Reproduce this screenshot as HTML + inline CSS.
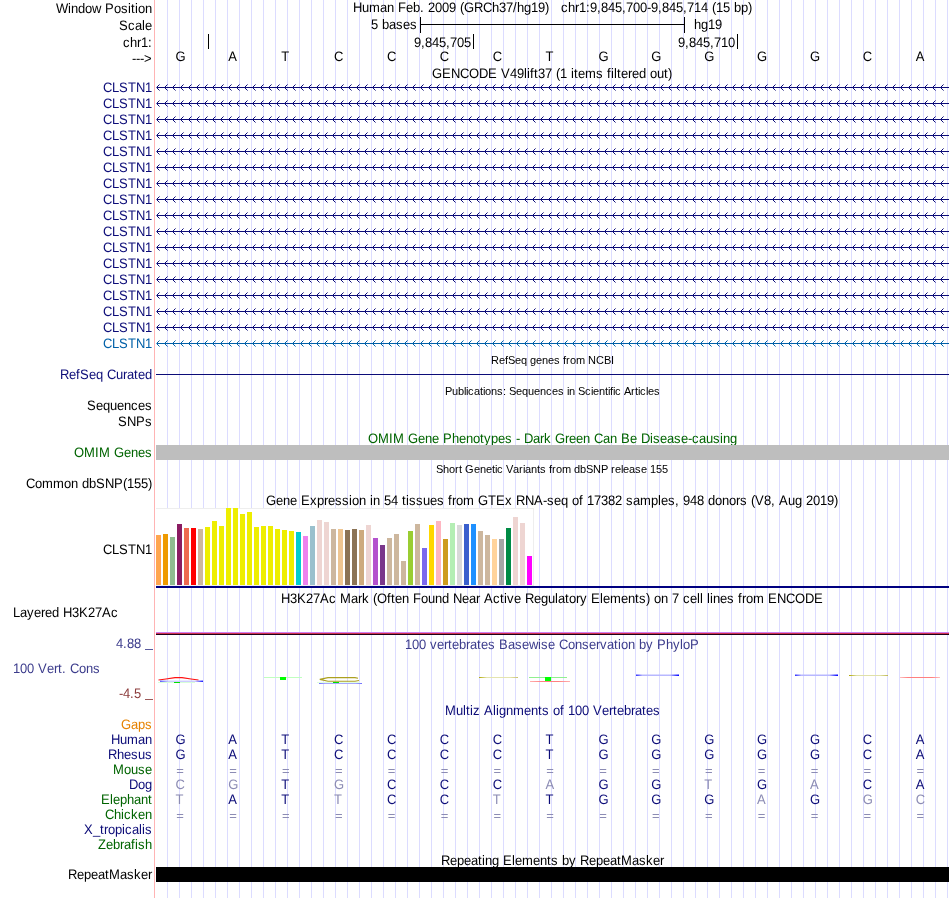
<!DOCTYPE html>
<html><head><meta charset="utf-8"><style>
html,body{margin:0;padding:0;background:#fff;width:950px;height:898px;overflow:hidden}
svg{display:block;will-change:transform;font-family:"Liberation Sans",sans-serif}
</style></head><body>
<svg width="950" height="898" viewBox="0 0 950 898">
<defs><pattern id="arN" x="157" y="84" width="8" height="16" patternUnits="userSpaceOnUse"><path d="M0,2h1v3h-1z M1,1h1v1h-1z M1,5h1v1h-1z" fill="#0c0c78"/><path d="M2,0h1v1h-1z M2,6h1v1h-1z" fill="#0c0c78" fill-opacity="0.55"/></pattern><pattern id="arT" x="157" y="84" width="8" height="16" patternUnits="userSpaceOnUse"><path d="M0,2h1v3h-1z M1,1h1v1h-1z M1,5h1v1h-1z" fill="#0060a8"/><path d="M2,0h1v1h-1z M2,6h1v1h-1z" fill="#0060a8" fill-opacity="0.55"/></pattern><linearGradient id="g1" x1="0" x2="1" y1="0" y2="0"><stop offset="0" stop-color="#4848ff"/><stop offset="0.2" stop-color="#c8c8ff"/><stop offset="0.82" stop-color="#c8c8ff"/><stop offset="1" stop-color="#0000ff"/></linearGradient><linearGradient id="g2" x1="0" x2="1" y1="0" y2="0"><stop offset="0" stop-color="#7070ff"/><stop offset="0.15" stop-color="#a8a8ff"/><stop offset="0.85" stop-color="#a8a8ff"/><stop offset="1" stop-color="#7070ff"/></linearGradient><linearGradient id="g3" x1="0" x2="1" y1="0" y2="0"><stop offset="0" stop-color="#b0a800"/><stop offset="0.2" stop-color="#e4e4b0"/><stop offset="0.8" stop-color="#e4e4b0"/><stop offset="1" stop-color="#c8c070"/></linearGradient><linearGradient id="g4" x1="0" x2="1" y1="0" y2="0"><stop offset="0" stop-color="#ffb0b0"/><stop offset="0.3" stop-color="#ff8080"/><stop offset="0.7" stop-color="#ff8080"/><stop offset="1" stop-color="#ffb0b0"/></linearGradient><linearGradient id="g5" x1="0" x2="1" y1="0" y2="0"><stop offset="0" stop-color="#3030ff"/><stop offset="0.15" stop-color="#b8b8ff"/><stop offset="0.8" stop-color="#b8b8ff"/><stop offset="1" stop-color="#0000ff"/></linearGradient><linearGradient id="g6" x1="0" x2="1" y1="0" y2="0"><stop offset="0" stop-color="#3030ff"/><stop offset="0.15" stop-color="#b8b8ff"/><stop offset="0.8" stop-color="#b8b8ff"/><stop offset="1" stop-color="#0000ff"/></linearGradient><linearGradient id="g7" x1="0" x2="1" y1="0" y2="0"><stop offset="0" stop-color="#b0a800"/><stop offset="0.2" stop-color="#e0e0a8"/><stop offset="0.8" stop-color="#e0e0a8"/><stop offset="1" stop-color="#c0b850"/></linearGradient><linearGradient id="g8" x1="0" x2="1" y1="0" y2="0"><stop offset="0" stop-color="#ffc0c0"/><stop offset="0.2" stop-color="#ff8080"/><stop offset="0.8" stop-color="#ff8080"/><stop offset="1" stop-color="#ffc0c0"/></linearGradient></defs>
<rect x="154" y="0" width="1" height="898" fill="#ffb4b4"/>
<rect x="167" y="0" width="1" height="898" fill="#dcdcff"/>
<rect x="179" y="0" width="1" height="898" fill="#dcdcff"/>
<rect x="191" y="0" width="1" height="898" fill="#dcdcff"/>
<rect x="203" y="0" width="1" height="898" fill="#dcdcff"/>
<rect x="215" y="0" width="1" height="898" fill="#dcdcff"/>
<rect x="227" y="0" width="1" height="898" fill="#dcdcff"/>
<rect x="239" y="0" width="1" height="898" fill="#dcdcff"/>
<rect x="251" y="0" width="1" height="898" fill="#dcdcff"/>
<rect x="263" y="0" width="1" height="898" fill="#dcdcff"/>
<rect x="275" y="0" width="1" height="898" fill="#dcdcff"/>
<rect x="287" y="0" width="1" height="898" fill="#dcdcff"/>
<rect x="299" y="0" width="1" height="898" fill="#dcdcff"/>
<rect x="311" y="0" width="1" height="898" fill="#dcdcff"/>
<rect x="323" y="0" width="1" height="898" fill="#dcdcff"/>
<rect x="335" y="0" width="1" height="898" fill="#dcdcff"/>
<rect x="347" y="0" width="1" height="898" fill="#dcdcff"/>
<rect x="359" y="0" width="1" height="898" fill="#dcdcff"/>
<rect x="371" y="0" width="1" height="898" fill="#dcdcff"/>
<rect x="383" y="0" width="1" height="898" fill="#dcdcff"/>
<rect x="395" y="0" width="1" height="898" fill="#dcdcff"/>
<rect x="407" y="0" width="1" height="898" fill="#dcdcff"/>
<rect x="419" y="0" width="1" height="898" fill="#dcdcff"/>
<rect x="431" y="0" width="1" height="898" fill="#dcdcff"/>
<rect x="443" y="0" width="1" height="898" fill="#dcdcff"/>
<rect x="455" y="0" width="1" height="898" fill="#dcdcff"/>
<rect x="467" y="0" width="1" height="898" fill="#dcdcff"/>
<rect x="479" y="0" width="1" height="898" fill="#dcdcff"/>
<rect x="491" y="0" width="1" height="898" fill="#dcdcff"/>
<rect x="503" y="0" width="1" height="898" fill="#dcdcff"/>
<rect x="515" y="0" width="1" height="898" fill="#dcdcff"/>
<rect x="527" y="0" width="1" height="898" fill="#dcdcff"/>
<rect x="539" y="0" width="1" height="898" fill="#dcdcff"/>
<rect x="551" y="0" width="1" height="898" fill="#dcdcff"/>
<rect x="563" y="0" width="1" height="898" fill="#dcdcff"/>
<rect x="575" y="0" width="1" height="898" fill="#dcdcff"/>
<rect x="587" y="0" width="1" height="898" fill="#dcdcff"/>
<rect x="599" y="0" width="1" height="898" fill="#dcdcff"/>
<rect x="611" y="0" width="1" height="898" fill="#dcdcff"/>
<rect x="623" y="0" width="1" height="898" fill="#dcdcff"/>
<rect x="635" y="0" width="1" height="898" fill="#dcdcff"/>
<rect x="647" y="0" width="1" height="898" fill="#dcdcff"/>
<rect x="659" y="0" width="1" height="898" fill="#dcdcff"/>
<rect x="671" y="0" width="1" height="898" fill="#dcdcff"/>
<rect x="683" y="0" width="1" height="898" fill="#dcdcff"/>
<rect x="695" y="0" width="1" height="898" fill="#dcdcff"/>
<rect x="707" y="0" width="1" height="898" fill="#dcdcff"/>
<rect x="719" y="0" width="1" height="898" fill="#dcdcff"/>
<rect x="731" y="0" width="1" height="898" fill="#dcdcff"/>
<rect x="743" y="0" width="1" height="898" fill="#dcdcff"/>
<rect x="755" y="0" width="1" height="898" fill="#dcdcff"/>
<rect x="767" y="0" width="1" height="898" fill="#dcdcff"/>
<rect x="779" y="0" width="1" height="898" fill="#dcdcff"/>
<rect x="791" y="0" width="1" height="898" fill="#dcdcff"/>
<rect x="803" y="0" width="1" height="898" fill="#dcdcff"/>
<rect x="815" y="0" width="1" height="898" fill="#dcdcff"/>
<rect x="827" y="0" width="1" height="898" fill="#dcdcff"/>
<rect x="839" y="0" width="1" height="898" fill="#dcdcff"/>
<rect x="851" y="0" width="1" height="898" fill="#dcdcff"/>
<rect x="863" y="0" width="1" height="898" fill="#dcdcff"/>
<rect x="875" y="0" width="1" height="898" fill="#dcdcff"/>
<rect x="887" y="0" width="1" height="898" fill="#dcdcff"/>
<rect x="899" y="0" width="1" height="898" fill="#dcdcff"/>
<rect x="911" y="0" width="1" height="898" fill="#dcdcff"/>
<rect x="923" y="0" width="1" height="898" fill="#dcdcff"/>
<rect x="935" y="0" width="1" height="898" fill="#dcdcff"/>
<rect x="947" y="0" width="1" height="898" fill="#dcdcff"/>
<text x="56 68 71 78 85 92 105 114 121 128 131 135 138 145" transform="translate(0,13) scale(1,1.055)" text-rendering="geometricPrecision" font-size="13" fill="#000">WindowPosition</text>
<text x="353 362 369 380 387 398 406 413 420 428 435 442 449 460 464 474 483 492 499 506 513 517 524 531 538 545 561 568 575 579 586 590 597 601 608 615 622 626 633 640 647 651 658 662 669 676 683 687 694 701 712 716 723 734 741 748" transform="translate(0,12) scale(1,1.055)" text-rendering="geometricPrecision" font-size="13" fill="#000">HumanFeb.2009(GRCh37/hg19)chr1:9,845,700-9,845,714(15bp)</text>
<text x="119 128 135 142 145" transform="translate(0,30) scale(1,1.055)" text-rendering="geometricPrecision" font-size="13" fill="#000">Scale</text>
<text x="371 382 389 396 403 410" transform="translate(0,29) scale(1,1.055)" text-rendering="geometricPrecision" font-size="13" fill="#000">5bases</text>
<rect x="420" y="17" width="1" height="16" fill="#000"/>
<rect x="420" y="24" width="265" height="1" fill="#000"/>
<rect x="684" y="17" width="1" height="16" fill="#000"/>
<text x="694 701 708 715" transform="translate(0,29) scale(1,1.055)" text-rendering="geometricPrecision" font-size="13" fill="#000">hg19</text>
<text x="123 130 137 141 148" transform="translate(0,47) scale(1,1.055)" text-rendering="geometricPrecision" font-size="13" fill="#000">chr1:</text>
<rect x="208" y="34" width="1" height="15" fill="#000"/>
<rect x="473" y="34" width="1" height="15" fill="#000"/>
<text x="414 421 425 432 439 446 450 457 464" transform="translate(0,47) scale(1,1.055)" text-rendering="geometricPrecision" font-size="13" fill="#000">9,845,705</text>
<rect x="737" y="34" width="1" height="15" fill="#000"/>
<text x="678 685 689 696 703 710 714 721 728" transform="translate(0,47) scale(1,1.055)" text-rendering="geometricPrecision" font-size="13" fill="#000">9,845,710</text>
<text x="132 136 140 144" transform="translate(0,63) scale(1,1.055)" text-rendering="geometricPrecision" font-size="13" fill="#000">---&gt;</text>
<text x="175.5" transform="translate(0,61) scale(1,1.055)" text-rendering="geometricPrecision" font-size="13" fill="#000">G</text>
<text x="228.37" transform="translate(0,61) scale(1,1.055)" text-rendering="geometricPrecision" font-size="13" fill="#000">A</text>
<text x="281.23" transform="translate(0,61) scale(1,1.055)" text-rendering="geometricPrecision" font-size="13" fill="#000">T</text>
<text x="334.1" transform="translate(0,61) scale(1,1.055)" text-rendering="geometricPrecision" font-size="13" fill="#000">C</text>
<text x="386.97" transform="translate(0,61) scale(1,1.055)" text-rendering="geometricPrecision" font-size="13" fill="#000">C</text>
<text x="439.83" transform="translate(0,61) scale(1,1.055)" text-rendering="geometricPrecision" font-size="13" fill="#000">C</text>
<text x="492.7" transform="translate(0,61) scale(1,1.055)" text-rendering="geometricPrecision" font-size="13" fill="#000">C</text>
<text x="545.57" transform="translate(0,61) scale(1,1.055)" text-rendering="geometricPrecision" font-size="13" fill="#000">T</text>
<text x="598.43" transform="translate(0,61) scale(1,1.055)" text-rendering="geometricPrecision" font-size="13" fill="#000">G</text>
<text x="651.3" transform="translate(0,61) scale(1,1.055)" text-rendering="geometricPrecision" font-size="13" fill="#000">G</text>
<text x="704.17" transform="translate(0,61) scale(1,1.055)" text-rendering="geometricPrecision" font-size="13" fill="#000">G</text>
<text x="757.03" transform="translate(0,61) scale(1,1.055)" text-rendering="geometricPrecision" font-size="13" fill="#000">G</text>
<text x="809.9" transform="translate(0,61) scale(1,1.055)" text-rendering="geometricPrecision" font-size="13" fill="#000">G</text>
<text x="862.77" transform="translate(0,61) scale(1,1.055)" text-rendering="geometricPrecision" font-size="13" fill="#000">C</text>
<text x="915.63" transform="translate(0,61) scale(1,1.055)" text-rendering="geometricPrecision" font-size="13" fill="#000">A</text>
<text x="432 442 451 460 469 479 488 501 510 517 524 527 530 534 538 545 556 560 571 574 578 585 596 607 611 614 617 621 628 632 639 650 657 664 668" transform="translate(0,78) scale(1,1.055)" text-rendering="geometricPrecision" font-size="13" fill="#000">GENCODEV49lift37(1itemsfilteredout)</text>
<text x="103 112 119 128 136 145" transform="translate(0,92) scale(1,1.055)" text-rendering="geometricPrecision" font-size="13" fill="#0c0c78">CLSTN1</text>
<rect x="157" y="87" width="792" height="1" fill="#0c0c78"/>
<rect x="156" y="87" width="1" height="1" fill="#0c0c78" fill-opacity="0.6"/>
<rect x="157" y="84" width="792" height="7" fill="url(#arN)"/>
<text x="103 112 119 128 136 145" transform="translate(0,108) scale(1,1.055)" text-rendering="geometricPrecision" font-size="13" fill="#0c0c78">CLSTN1</text>
<rect x="157" y="103" width="792" height="1" fill="#0c0c78"/>
<rect x="156" y="103" width="1" height="1" fill="#0c0c78" fill-opacity="0.6"/>
<rect x="157" y="100" width="792" height="7" fill="url(#arN)"/>
<text x="103 112 119 128 136 145" transform="translate(0,124) scale(1,1.055)" text-rendering="geometricPrecision" font-size="13" fill="#0c0c78">CLSTN1</text>
<rect x="157" y="119" width="792" height="1" fill="#0c0c78"/>
<rect x="156" y="119" width="1" height="1" fill="#0c0c78" fill-opacity="0.6"/>
<rect x="157" y="116" width="792" height="7" fill="url(#arN)"/>
<text x="103 112 119 128 136 145" transform="translate(0,140) scale(1,1.055)" text-rendering="geometricPrecision" font-size="13" fill="#0c0c78">CLSTN1</text>
<rect x="157" y="135" width="792" height="1" fill="#0c0c78"/>
<rect x="156" y="135" width="1" height="1" fill="#0c0c78" fill-opacity="0.6"/>
<rect x="157" y="132" width="792" height="7" fill="url(#arN)"/>
<text x="103 112 119 128 136 145" transform="translate(0,156) scale(1,1.055)" text-rendering="geometricPrecision" font-size="13" fill="#0c0c78">CLSTN1</text>
<rect x="157" y="151" width="792" height="1" fill="#0c0c78"/>
<rect x="156" y="151" width="1" height="1" fill="#0c0c78" fill-opacity="0.6"/>
<rect x="157" y="148" width="792" height="7" fill="url(#arN)"/>
<text x="103 112 119 128 136 145" transform="translate(0,172) scale(1,1.055)" text-rendering="geometricPrecision" font-size="13" fill="#0c0c78">CLSTN1</text>
<rect x="157" y="167" width="792" height="1" fill="#0c0c78"/>
<rect x="156" y="167" width="1" height="1" fill="#0c0c78" fill-opacity="0.6"/>
<rect x="157" y="164" width="792" height="7" fill="url(#arN)"/>
<text x="103 112 119 128 136 145" transform="translate(0,188) scale(1,1.055)" text-rendering="geometricPrecision" font-size="13" fill="#0c0c78">CLSTN1</text>
<rect x="157" y="183" width="792" height="1" fill="#0c0c78"/>
<rect x="156" y="183" width="1" height="1" fill="#0c0c78" fill-opacity="0.6"/>
<rect x="157" y="180" width="792" height="7" fill="url(#arN)"/>
<text x="103 112 119 128 136 145" transform="translate(0,204) scale(1,1.055)" text-rendering="geometricPrecision" font-size="13" fill="#0c0c78">CLSTN1</text>
<rect x="157" y="199" width="792" height="1" fill="#0c0c78"/>
<rect x="156" y="199" width="1" height="1" fill="#0c0c78" fill-opacity="0.6"/>
<rect x="157" y="196" width="792" height="7" fill="url(#arN)"/>
<text x="103 112 119 128 136 145" transform="translate(0,220) scale(1,1.055)" text-rendering="geometricPrecision" font-size="13" fill="#0c0c78">CLSTN1</text>
<rect x="157" y="215" width="792" height="1" fill="#0c0c78"/>
<rect x="156" y="215" width="1" height="1" fill="#0c0c78" fill-opacity="0.6"/>
<rect x="157" y="212" width="792" height="7" fill="url(#arN)"/>
<text x="103 112 119 128 136 145" transform="translate(0,236) scale(1,1.055)" text-rendering="geometricPrecision" font-size="13" fill="#0c0c78">CLSTN1</text>
<rect x="157" y="231" width="792" height="1" fill="#0c0c78"/>
<rect x="156" y="231" width="1" height="1" fill="#0c0c78" fill-opacity="0.6"/>
<rect x="157" y="228" width="792" height="7" fill="url(#arN)"/>
<text x="103 112 119 128 136 145" transform="translate(0,252) scale(1,1.055)" text-rendering="geometricPrecision" font-size="13" fill="#0c0c78">CLSTN1</text>
<rect x="157" y="247" width="792" height="1" fill="#0c0c78"/>
<rect x="156" y="247" width="1" height="1" fill="#0c0c78" fill-opacity="0.6"/>
<rect x="157" y="244" width="792" height="7" fill="url(#arN)"/>
<text x="103 112 119 128 136 145" transform="translate(0,268) scale(1,1.055)" text-rendering="geometricPrecision" font-size="13" fill="#0c0c78">CLSTN1</text>
<rect x="157" y="263" width="792" height="1" fill="#0c0c78"/>
<rect x="156" y="263" width="1" height="1" fill="#0c0c78" fill-opacity="0.6"/>
<rect x="157" y="260" width="792" height="7" fill="url(#arN)"/>
<text x="103 112 119 128 136 145" transform="translate(0,284) scale(1,1.055)" text-rendering="geometricPrecision" font-size="13" fill="#0c0c78">CLSTN1</text>
<rect x="157" y="279" width="792" height="1" fill="#0c0c78"/>
<rect x="156" y="279" width="1" height="1" fill="#0c0c78" fill-opacity="0.6"/>
<rect x="157" y="276" width="792" height="7" fill="url(#arN)"/>
<text x="103 112 119 128 136 145" transform="translate(0,300) scale(1,1.055)" text-rendering="geometricPrecision" font-size="13" fill="#0c0c78">CLSTN1</text>
<rect x="157" y="295" width="792" height="1" fill="#0c0c78"/>
<rect x="156" y="295" width="1" height="1" fill="#0c0c78" fill-opacity="0.6"/>
<rect x="157" y="292" width="792" height="7" fill="url(#arN)"/>
<text x="103 112 119 128 136 145" transform="translate(0,316) scale(1,1.055)" text-rendering="geometricPrecision" font-size="13" fill="#0c0c78">CLSTN1</text>
<rect x="157" y="311" width="792" height="1" fill="#0c0c78"/>
<rect x="156" y="311" width="1" height="1" fill="#0c0c78" fill-opacity="0.6"/>
<rect x="157" y="308" width="792" height="7" fill="url(#arN)"/>
<text x="103 112 119 128 136 145" transform="translate(0,332) scale(1,1.055)" text-rendering="geometricPrecision" font-size="13" fill="#0c0c78">CLSTN1</text>
<rect x="157" y="327" width="792" height="1" fill="#0c0c78"/>
<rect x="156" y="327" width="1" height="1" fill="#0c0c78" fill-opacity="0.6"/>
<rect x="157" y="324" width="792" height="7" fill="url(#arN)"/>
<text x="103 112 119 128 136 145" transform="translate(0,348) scale(1,1.055)" text-rendering="geometricPrecision" font-size="13" fill="#0060a8">CLSTN1</text>
<rect x="157" y="343" width="792" height="1" fill="#0060a8"/>
<rect x="156" y="343" width="1" height="1" fill="#0060a8" fill-opacity="0.6"/>
<rect x="157" y="340" width="792" height="7" fill="url(#arT)"/>
<text x="491 499 505 508 515 521 530 536 542 548 554 563 566 570 576 588 596 604 611" y="364" font-size="11" fill="#000">RefSeqgenesfromNCBI</text>
<text x="60 69 76 80 89 96 107 116 123 127 134 138 145" transform="translate(0,379) scale(1,1.055)" text-rendering="geometricPrecision" font-size="13" fill="#0c0c78">RefSeqCurated</text>
<rect x="156" y="374" width="793" height="1" fill="#0c0c78"/>
<text x="445 452 458 464 466 468 474 480 483 485 491 497 503 509 516 522 528 534 540 546 552 558 567 569 578 585 591 593 599 605 608 610 613 615 624 631 635 638 640 646 648 654" y="395" font-size="11" fill="#000">Publications:SequencesinScientificArticles</text>
<text x="87 96 103 110 117 124 131 138 145" transform="translate(0,410) scale(1,1.055)" text-rendering="geometricPrecision" font-size="13" fill="#000">Sequences</text>
<text x="118 127 136 145" transform="translate(0,426) scale(1,1.055)" text-rendering="geometricPrecision" font-size="13" fill="#000">SNPs</text>
<text x="368 378 389 393 408 418 425 432 443 452 459 466 473 480 484 491 498 505 516 524 533 540 544 555 565 569 576 583 594 603 610 621 630 641 650 653 660 667 674 681 688 692 699 706 713 720 723 730" transform="translate(0,443) scale(1,1.055)" text-rendering="geometricPrecision" font-size="13" fill="#006400">OMIMGenePhenotypes-DarkGreenCanBeDisease-causing</text>
<text x="74 84 95 99 114 124 131 138 145" transform="translate(0,457) scale(1,1.055)" text-rendering="geometricPrecision" font-size="13" fill="#006400">OMIMGenes</text>
<rect x="156" y="445" width="793" height="15" fill="#bebebe"/>
<text x="436 443 449 455 459 465 474 480 486 492 495 497 506 513 519 523 525 531 537 540 549 552 556 562 574 580 586 593 601 611 615 621 623 629 635 641 650 656 662" y="473" font-size="11" fill="#000">ShortGeneticVariantsfromdbSNPrelease155</text>
<text x="26 35 42 53 64 71 82 89 96 105 114 123 127 134 141 148" transform="translate(0,488) scale(1,1.055)" text-rendering="geometricPrecision" font-size="13" fill="#000">CommondbSNP(155)</text>
<text x="266 276 283 290 301 310 317 324 328 335 342 349 352 359 370 373 384 391 402 406 409 416 423 430 437 448 452 456 463 478 488 496 505 516 525 534 543 547 554 561 572 579 587 594 601 608 615 626 633 640 651 658 661 668 675 683 690 697 708 715 722 729 736 740 751 755 764 771 779 788 795 806 813 820 827 834" transform="translate(0,505) scale(1,1.055)" text-rendering="geometricPrecision" font-size="13" fill="#000">GeneExpressionin54tissuesfromGTExRNA-seqof17382samples,948donors(V8,Aug2019)</text>
<text x="103 112 119 128 136 145" transform="translate(0,554) scale(1,1.055)" text-rendering="geometricPrecision" font-size="13" fill="#000">CLSTN1</text>
<rect x="156" y="508" width="378" height="78" fill="#eeeeee"/>
<rect x="156" y="509" width="377" height="76" fill="#ffffff"/>
<rect x="156" y="535" width="5" height="50" fill="#FFA54F"/>
<rect x="163" y="534" width="5" height="51" fill="#EE9A00"/>
<rect x="170" y="537" width="5" height="48" fill="#8FBC8F"/>
<rect x="177" y="524" width="5" height="61" fill="#8B1C62"/>
<rect x="184" y="528" width="5" height="57" fill="#EE6A50"/>
<rect x="191" y="528" width="5" height="57" fill="#FF0000"/>
<rect x="198" y="529" width="5" height="56" fill="#CDB79E"/>
<rect x="205" y="527" width="5" height="58" fill="#EEEE00"/>
<rect x="212" y="521" width="5" height="64" fill="#EEEE00"/>
<rect x="219" y="526" width="5" height="59" fill="#EEEE00"/>
<rect x="226" y="508" width="5" height="77" fill="#EEEE00"/>
<rect x="233" y="508" width="5" height="77" fill="#EEEE00"/>
<rect x="240" y="514" width="5" height="71" fill="#EEEE00"/>
<rect x="247" y="512" width="5" height="73" fill="#EEEE00"/>
<rect x="254" y="527" width="5" height="58" fill="#EEEE00"/>
<rect x="261" y="526" width="5" height="59" fill="#EEEE00"/>
<rect x="268" y="526" width="5" height="59" fill="#EEEE00"/>
<rect x="275" y="529" width="5" height="56" fill="#EEEE00"/>
<rect x="282" y="530" width="5" height="55" fill="#EEEE00"/>
<rect x="289" y="531" width="5" height="54" fill="#EEEE00"/>
<rect x="296" y="532" width="5" height="53" fill="#00CED1"/>
<rect x="303" y="536" width="5" height="49" fill="#EE82EE"/>
<rect x="310" y="526" width="5" height="59" fill="#9AC0CD"/>
<rect x="317" y="520" width="5" height="65" fill="#EED5D2"/>
<rect x="324" y="522" width="5" height="63" fill="#EED5D2"/>
<rect x="331" y="529" width="5" height="56" fill="#CDB79E"/>
<rect x="338" y="529" width="5" height="56" fill="#EEC591"/>
<rect x="345" y="530" width="5" height="55" fill="#8B7355"/>
<rect x="352" y="529" width="5" height="56" fill="#8B7355"/>
<rect x="359" y="530" width="5" height="55" fill="#CDAA7D"/>
<rect x="366" y="525" width="5" height="60" fill="#EED5D2"/>
<rect x="373" y="538" width="5" height="47" fill="#B452CD"/>
<rect x="380" y="545" width="5" height="40" fill="#7A378B"/>
<rect x="387" y="538" width="5" height="47" fill="#CDB79E"/>
<rect x="394" y="534" width="5" height="51" fill="#CDB79E"/>
<rect x="401" y="561" width="5" height="24" fill="#CDB79E"/>
<rect x="408" y="531" width="5" height="54" fill="#9ACD32"/>
<rect x="415" y="524" width="5" height="61" fill="#CDB79E"/>
<rect x="422" y="548" width="5" height="37" fill="#7B68EE"/>
<rect x="429" y="525" width="5" height="60" fill="#FFD700"/>
<rect x="436" y="521" width="5" height="64" fill="#FFB6C1"/>
<rect x="443" y="539" width="5" height="46" fill="#CD9B1D"/>
<rect x="450" y="523" width="5" height="62" fill="#B4EEB4"/>
<rect x="457" y="525" width="5" height="60" fill="#D9D9D9"/>
<rect x="464" y="524" width="5" height="61" fill="#3A5FCD"/>
<rect x="471" y="524" width="5" height="61" fill="#1E90FF"/>
<rect x="478" y="531" width="5" height="54" fill="#CDB79E"/>
<rect x="485" y="535" width="5" height="50" fill="#CDB79E"/>
<rect x="492" y="539" width="5" height="46" fill="#FFD39B"/>
<rect x="499" y="539" width="5" height="46" fill="#A6A6A6"/>
<rect x="506" y="528" width="5" height="57" fill="#008B45"/>
<rect x="513" y="517" width="5" height="68" fill="#EED5D2"/>
<rect x="520" y="523" width="5" height="62" fill="#EED5D2"/>
<rect x="527" y="556" width="5" height="29" fill="#FF00FF"/>
<rect x="156" y="586" width="793" height="2" fill="#000080"/>
<text x="281 290 297 306 313 320 329 340 351 358 362 373 377 387 391 395 402 413 421 428 435 442 453 462 469 476 484 493 500 504 507 514 525 534 541 548 555 558 565 569 576 580 591 600 603 610 621 628 635 639 646 654 661 672 683 690 697 700 707 710 713 720 727 738 742 746 753 768 777 786 795 805 814" transform="translate(0,603) scale(1,1.055)" text-rendering="geometricPrecision" font-size="13" fill="#000">H3K27AcMark(OftenFoundNearActiveRegulatoryElements)on7celllinesfromENCODE</text>
<text x="13 20 27 34 41 45 52 63 72 79 88 95 102 111" transform="translate(0,617) scale(1,1.055)" text-rendering="geometricPrecision" font-size="13" fill="#000">LayeredH3K27Ac</text>
<rect x="156" y="632" width="793" height="1" fill="#d080f0"/>
<rect x="156" y="633" width="793" height="1" fill="#d03050"/>
<rect x="156" y="634" width="793" height="1" fill="#200018"/>
<text x="405 412 419 430 437 444 448 452 459 466 470 477 481 488 499 508 515 522 529 538 541 548 559 568 575 582 589 596 600 607 614 618 621 628 639 646 657 666 673 680 683 690" transform="translate(0,649) scale(1,1.055)" text-rendering="geometricPrecision" font-size="13" fill="#3c3c8c">100vertebratesBasewiseConservationbyPhyloP</text>
<text x="116 123 127 134" transform="translate(0,648) scale(1,1.055)" text-rendering="geometricPrecision" font-size="13" fill="#3c3c8c">4.88</text>
<rect x="145" y="649" width="8" height="1" fill="#3c3c8c" fill-opacity="0.85"/>
<text x="13 20 27 38 47 54 58 62 70 79 86 93" transform="translate(0,673) scale(1,1.055)" text-rendering="geometricPrecision" font-size="13" fill="#3c3c8c">100Vert.Cons</text>
<text x="119 123 130 134" transform="translate(0,698) scale(1,1.055)" text-rendering="geometricPrecision" font-size="13" fill="#8c3c3c">-4.5</text>
<rect x="145" y="699" width="8" height="1" fill="#8c3c3c" fill-opacity="0.85"/>
<path d="M158.5,680 L166,679 L175,677.6 L182,677.6 L191,679 L198.5,680" stroke="#ff1010" stroke-width="1.1" fill="none" stroke-linejoin="round"/>
<rect x="160" y="680.6" width="43" height="1.3" fill="url(#g1)"/>
<rect x="158" y="682" width="37" height="1" fill="#d8ffd8"/>
<rect x="174" y="682" width="6" height="1" fill="#00e000"/>
<rect x="264" y="677" width="38" height="1" fill="#c0ffc0"/>
<rect x="280" y="677" width="6" height="3" fill="#00ff00"/>
<path d="M358,678.2 L355,677.6 L328,677.6 L319.8,679.4 L328,681.2 L355,681.2 L359,680.5" stroke="#aca020" stroke-width="1.15" fill="none"/>
<rect x="317" y="682" width="43" height="1" fill="#e0ffe0"/>
<rect x="333" y="682" width="6" height="1" fill="#00e000"/>
<rect x="319" y="683" width="43" height="1" fill="url(#g2)"/>
<rect x="479" y="677" width="39" height="1" fill="url(#g3)"/>
<rect x="529" y="677" width="38" height="1" fill="#90f090"/>
<rect x="545" y="677" width="6" height="4" fill="#00ff00"/>
<rect x="530" y="681" width="40" height="1" fill="url(#g4)"/>
<rect x="636" y="674.5" width="43" height="1.5" fill="url(#g5)"/>
<rect x="795" y="674.5" width="43" height="1.5" fill="url(#g6)"/>
<rect x="849" y="675" width="39" height="1" fill="url(#g7)"/>
<rect x="900" y="677" width="40" height="1" fill="url(#g8)"/>
<text x="445 456 463 466 470 473 484 493 496 499 506 513 524 531 538 542 553 560 568 575 582 593 602 609 613 617 624 631 635 642 646 653" transform="translate(0,715) scale(1,1.055)" text-rendering="geometricPrecision" font-size="13" fill="#0c0c78">MultizAlignmentsof100Vertebrates</text>
<text x="121 131 138 145" transform="translate(0,729) scale(1,1.055)" text-rendering="geometricPrecision" font-size="13" fill="#e68200">Gaps</text>
<text x="111 120 127 138 145" transform="translate(0,744) scale(1,1.055)" text-rendering="geometricPrecision" font-size="13" fill="#0c0c78">Human</text>
<text x="108 117 124 131 138 145" transform="translate(0,759) scale(1,1.055)" text-rendering="geometricPrecision" font-size="13" fill="#0c0c78">Rhesus</text>
<text x="113 124 131 138 145" transform="translate(0,774) scale(1,1.055)" text-rendering="geometricPrecision" font-size="13" fill="#006400">Mouse</text>
<text x="129 138 145" transform="translate(0,789) scale(1,1.055)" text-rendering="geometricPrecision" font-size="13" fill="#0c0c78">Dog</text>
<text x="101 110 113 120 127 134 141 148" transform="translate(0,804) scale(1,1.055)" text-rendering="geometricPrecision" font-size="13" fill="#006400">Elephant</text>
<text x="105 114 121 124 131 138 145" transform="translate(0,819) scale(1,1.055)" text-rendering="geometricPrecision" font-size="13" fill="#006400">Chicken</text>
<text x="84 93 100 104 108 115 122 125 132 139 142 145" transform="translate(0,834) scale(1,1.055)" text-rendering="geometricPrecision" font-size="13" fill="#0c0c78">X_tropicalis</text>
<text x="98 106 113 120 124 131 135 138 145" transform="translate(0,849) scale(1,1.055)" text-rendering="geometricPrecision" font-size="13" fill="#006400">Zebrafish</text>
<text x="175.5" transform="translate(0,744) scale(1,1.055)" text-rendering="geometricPrecision" font-size="13" fill="#0c0c78">G</text>
<text x="228.37" transform="translate(0,744) scale(1,1.055)" text-rendering="geometricPrecision" font-size="13" fill="#0c0c78">A</text>
<text x="281.23" transform="translate(0,744) scale(1,1.055)" text-rendering="geometricPrecision" font-size="13" fill="#0c0c78">T</text>
<text x="334.1" transform="translate(0,744) scale(1,1.055)" text-rendering="geometricPrecision" font-size="13" fill="#0c0c78">C</text>
<text x="386.97" transform="translate(0,744) scale(1,1.055)" text-rendering="geometricPrecision" font-size="13" fill="#0c0c78">C</text>
<text x="439.83" transform="translate(0,744) scale(1,1.055)" text-rendering="geometricPrecision" font-size="13" fill="#0c0c78">C</text>
<text x="492.7" transform="translate(0,744) scale(1,1.055)" text-rendering="geometricPrecision" font-size="13" fill="#0c0c78">C</text>
<text x="545.57" transform="translate(0,744) scale(1,1.055)" text-rendering="geometricPrecision" font-size="13" fill="#0c0c78">T</text>
<text x="598.43" transform="translate(0,744) scale(1,1.055)" text-rendering="geometricPrecision" font-size="13" fill="#0c0c78">G</text>
<text x="651.3" transform="translate(0,744) scale(1,1.055)" text-rendering="geometricPrecision" font-size="13" fill="#0c0c78">G</text>
<text x="704.17" transform="translate(0,744) scale(1,1.055)" text-rendering="geometricPrecision" font-size="13" fill="#0c0c78">G</text>
<text x="757.03" transform="translate(0,744) scale(1,1.055)" text-rendering="geometricPrecision" font-size="13" fill="#0c0c78">G</text>
<text x="809.9" transform="translate(0,744) scale(1,1.055)" text-rendering="geometricPrecision" font-size="13" fill="#0c0c78">G</text>
<text x="862.77" transform="translate(0,744) scale(1,1.055)" text-rendering="geometricPrecision" font-size="13" fill="#0c0c78">C</text>
<text x="915.63" transform="translate(0,744) scale(1,1.055)" text-rendering="geometricPrecision" font-size="13" fill="#0c0c78">A</text>
<text x="175.5" transform="translate(0,759) scale(1,1.055)" text-rendering="geometricPrecision" font-size="13" fill="#0c0c78">G</text>
<text x="228.37" transform="translate(0,759) scale(1,1.055)" text-rendering="geometricPrecision" font-size="13" fill="#0c0c78">A</text>
<text x="281.23" transform="translate(0,759) scale(1,1.055)" text-rendering="geometricPrecision" font-size="13" fill="#0c0c78">T</text>
<text x="334.1" transform="translate(0,759) scale(1,1.055)" text-rendering="geometricPrecision" font-size="13" fill="#0c0c78">C</text>
<text x="386.97" transform="translate(0,759) scale(1,1.055)" text-rendering="geometricPrecision" font-size="13" fill="#0c0c78">C</text>
<text x="439.83" transform="translate(0,759) scale(1,1.055)" text-rendering="geometricPrecision" font-size="13" fill="#0c0c78">C</text>
<text x="492.7" transform="translate(0,759) scale(1,1.055)" text-rendering="geometricPrecision" font-size="13" fill="#0c0c78">C</text>
<text x="545.57" transform="translate(0,759) scale(1,1.055)" text-rendering="geometricPrecision" font-size="13" fill="#0c0c78">T</text>
<text x="598.43" transform="translate(0,759) scale(1,1.055)" text-rendering="geometricPrecision" font-size="13" fill="#0c0c78">G</text>
<text x="651.3" transform="translate(0,759) scale(1,1.055)" text-rendering="geometricPrecision" font-size="13" fill="#0c0c78">G</text>
<text x="704.17" transform="translate(0,759) scale(1,1.055)" text-rendering="geometricPrecision" font-size="13" fill="#0c0c78">G</text>
<text x="757.03" transform="translate(0,759) scale(1,1.055)" text-rendering="geometricPrecision" font-size="13" fill="#0c0c78">G</text>
<text x="809.9" transform="translate(0,759) scale(1,1.055)" text-rendering="geometricPrecision" font-size="13" fill="#0c0c78">G</text>
<text x="862.77" transform="translate(0,759) scale(1,1.055)" text-rendering="geometricPrecision" font-size="13" fill="#0c0c78">C</text>
<text x="915.63" transform="translate(0,759) scale(1,1.055)" text-rendering="geometricPrecision" font-size="13" fill="#0c0c78">A</text>
<text x="176.3" y="775" font-size="13" fill="#8c8cb4">=</text>
<text x="229.17" y="775" font-size="13" fill="#8c8cb4">=</text>
<text x="282.03" y="775" font-size="13" fill="#8c8cb4">=</text>
<text x="334.9" y="775" font-size="13" fill="#8c8cb4">=</text>
<text x="387.77" y="775" font-size="13" fill="#8c8cb4">=</text>
<text x="440.63" y="775" font-size="13" fill="#8c8cb4">=</text>
<text x="493.5" y="775" font-size="13" fill="#8c8cb4">=</text>
<text x="546.37" y="775" font-size="13" fill="#8c8cb4">=</text>
<text x="599.23" y="775" font-size="13" fill="#8c8cb4">=</text>
<text x="652.1" y="775" font-size="13" fill="#8c8cb4">=</text>
<text x="704.97" y="775" font-size="13" fill="#8c8cb4">=</text>
<text x="757.83" y="775" font-size="13" fill="#8c8cb4">=</text>
<text x="810.7" y="775" font-size="13" fill="#8c8cb4">=</text>
<text x="863.57" y="775" font-size="13" fill="#8c8cb4">=</text>
<text x="916.43" y="775" font-size="13" fill="#8c8cb4">=</text>
<text x="175.5" transform="translate(0,789) scale(1,1.055)" text-rendering="geometricPrecision" font-size="13" fill="#8c8cb4">C</text>
<text x="228.37" transform="translate(0,789) scale(1,1.055)" text-rendering="geometricPrecision" font-size="13" fill="#8c8cb4">G</text>
<text x="281.23" transform="translate(0,789) scale(1,1.055)" text-rendering="geometricPrecision" font-size="13" fill="#0c0c78">T</text>
<text x="334.1" transform="translate(0,789) scale(1,1.055)" text-rendering="geometricPrecision" font-size="13" fill="#8c8cb4">G</text>
<text x="386.97" transform="translate(0,789) scale(1,1.055)" text-rendering="geometricPrecision" font-size="13" fill="#0c0c78">C</text>
<text x="439.83" transform="translate(0,789) scale(1,1.055)" text-rendering="geometricPrecision" font-size="13" fill="#0c0c78">C</text>
<text x="492.7" transform="translate(0,789) scale(1,1.055)" text-rendering="geometricPrecision" font-size="13" fill="#0c0c78">C</text>
<text x="545.57" transform="translate(0,789) scale(1,1.055)" text-rendering="geometricPrecision" font-size="13" fill="#8c8cb4">A</text>
<text x="598.43" transform="translate(0,789) scale(1,1.055)" text-rendering="geometricPrecision" font-size="13" fill="#0c0c78">G</text>
<text x="651.3" transform="translate(0,789) scale(1,1.055)" text-rendering="geometricPrecision" font-size="13" fill="#0c0c78">G</text>
<text x="704.17" transform="translate(0,789) scale(1,1.055)" text-rendering="geometricPrecision" font-size="13" fill="#8c8cb4">T</text>
<text x="757.03" transform="translate(0,789) scale(1,1.055)" text-rendering="geometricPrecision" font-size="13" fill="#0c0c78">G</text>
<text x="809.9" transform="translate(0,789) scale(1,1.055)" text-rendering="geometricPrecision" font-size="13" fill="#8c8cb4">A</text>
<text x="862.77" transform="translate(0,789) scale(1,1.055)" text-rendering="geometricPrecision" font-size="13" fill="#0c0c78">C</text>
<text x="915.63" transform="translate(0,789) scale(1,1.055)" text-rendering="geometricPrecision" font-size="13" fill="#0c0c78">A</text>
<text x="175.5" transform="translate(0,804) scale(1,1.055)" text-rendering="geometricPrecision" font-size="13" fill="#8c8cb4">T</text>
<text x="228.37" transform="translate(0,804) scale(1,1.055)" text-rendering="geometricPrecision" font-size="13" fill="#0c0c78">A</text>
<text x="281.23" transform="translate(0,804) scale(1,1.055)" text-rendering="geometricPrecision" font-size="13" fill="#0c0c78">T</text>
<text x="334.1" transform="translate(0,804) scale(1,1.055)" text-rendering="geometricPrecision" font-size="13" fill="#8c8cb4">T</text>
<text x="386.97" transform="translate(0,804) scale(1,1.055)" text-rendering="geometricPrecision" font-size="13" fill="#0c0c78">C</text>
<text x="439.83" transform="translate(0,804) scale(1,1.055)" text-rendering="geometricPrecision" font-size="13" fill="#0c0c78">C</text>
<text x="492.7" transform="translate(0,804) scale(1,1.055)" text-rendering="geometricPrecision" font-size="13" fill="#8c8cb4">T</text>
<text x="545.57" transform="translate(0,804) scale(1,1.055)" text-rendering="geometricPrecision" font-size="13" fill="#0c0c78">T</text>
<text x="598.43" transform="translate(0,804) scale(1,1.055)" text-rendering="geometricPrecision" font-size="13" fill="#0c0c78">G</text>
<text x="651.3" transform="translate(0,804) scale(1,1.055)" text-rendering="geometricPrecision" font-size="13" fill="#0c0c78">G</text>
<text x="704.17" transform="translate(0,804) scale(1,1.055)" text-rendering="geometricPrecision" font-size="13" fill="#0c0c78">G</text>
<text x="757.03" transform="translate(0,804) scale(1,1.055)" text-rendering="geometricPrecision" font-size="13" fill="#8c8cb4">A</text>
<text x="809.9" transform="translate(0,804) scale(1,1.055)" text-rendering="geometricPrecision" font-size="13" fill="#0c0c78">G</text>
<text x="862.77" transform="translate(0,804) scale(1,1.055)" text-rendering="geometricPrecision" font-size="13" fill="#8c8cb4">G</text>
<text x="915.63" transform="translate(0,804) scale(1,1.055)" text-rendering="geometricPrecision" font-size="13" fill="#8c8cb4">C</text>
<text x="176.3" y="820" font-size="13" fill="#8c8cb4">=</text>
<text x="229.17" y="820" font-size="13" fill="#8c8cb4">=</text>
<text x="282.03" y="820" font-size="13" fill="#8c8cb4">=</text>
<text x="334.9" y="820" font-size="13" fill="#8c8cb4">=</text>
<text x="387.77" y="820" font-size="13" fill="#8c8cb4">=</text>
<text x="440.63" y="820" font-size="13" fill="#8c8cb4">=</text>
<text x="493.5" y="820" font-size="13" fill="#8c8cb4">=</text>
<text x="546.37" y="820" font-size="13" fill="#8c8cb4">=</text>
<text x="599.23" y="820" font-size="13" fill="#8c8cb4">=</text>
<text x="652.1" y="820" font-size="13" fill="#8c8cb4">=</text>
<text x="704.97" y="820" font-size="13" fill="#8c8cb4">=</text>
<text x="757.83" y="820" font-size="13" fill="#8c8cb4">=</text>
<text x="810.7" y="820" font-size="13" fill="#8c8cb4">=</text>
<text x="863.57" y="820" font-size="13" fill="#8c8cb4">=</text>
<text x="916.43" y="820" font-size="13" fill="#8c8cb4">=</text>
<text x="441 450 457 464 471 478 482 485 492 503 512 515 522 533 540 547 551 562 569 580 589 596 603 610 617 621 632 639 646 653 660" transform="translate(0,865) scale(1,1.055)" text-rendering="geometricPrecision" font-size="13" fill="#000">RepeatingElementsbyRepeatMasker</text>
<text x="68 77 84 91 98 105 109 120 127 134 141 148" transform="translate(0,879) scale(1,1.055)" text-rendering="geometricPrecision" font-size="13" fill="#000">RepeatMasker</text>
<rect x="156" y="867" width="793" height="15" fill="#000"/>
</svg>
</body></html>
